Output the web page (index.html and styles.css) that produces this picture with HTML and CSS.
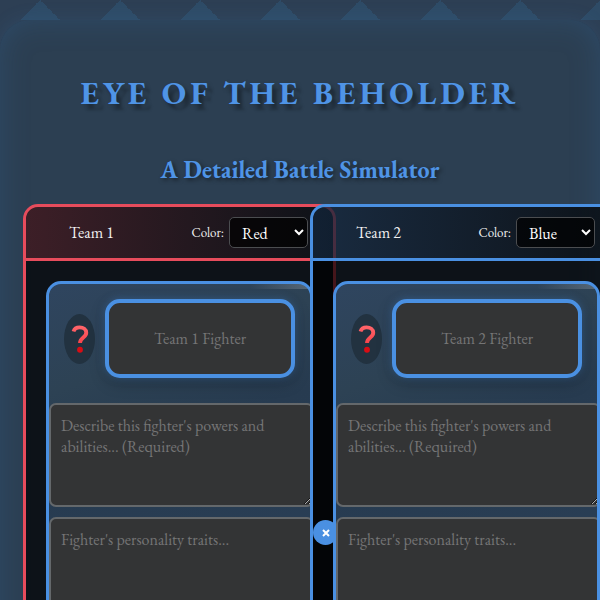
FILE: index.html
```html
<!DOCTYPE html>
<html lang="en">
<head>
<meta charset="utf-8">
<meta name="viewport" content="width=device-width, initial-scale=1">
<title>Eye of the Beholder</title>
<link rel="stylesheet" href="styles.css">
</head>
<body>
<main class="container">
  <h1 class="title">Eye of the Beholder</h1>
  <h2 class="subtitle">A Detailed Battle Simulator</h2>
  <div class="teams">
    <section class="team team-red">
      <header class="team-header">
        <h3 class="team-name">Team 1</h3>
        <div class="team-color">
          <label for="color1">Color:</label>
          <select id="color1"><option>Red</option><option>Blue</option></select>
        </div>
      </header>
      <article class="fighter">
        <div class="fighter-header">
          <span class="avatar"><svg viewBox="0 0 16 26" aria-hidden="true"><defs><linearGradient id="q1" x1="0" y1="0" x2="0" y2="1"><stop offset="0" stop-color="#ff6368"/><stop offset="1" stop-color="#f8444c"/></linearGradient></defs><path d="M2 6C2.800 3.400 4.800 2.200 7.600 2.200c3.400 0 6.200 1.600 6.200 5 0 4.600-5.800 4.400-5.800 9.600" fill="none" stroke="url(#q1)" stroke-width="3.600" stroke-linecap="butt"/><circle cx="8" cy="23" r="2.700" fill="#d80d14"/></svg></span>
          <input class="fighter-name" type="text" placeholder="Team 1 Fighter" aria-label="Team 1 Fighter">
        </div>
        <textarea placeholder="Describe this fighter's powers and abilities... (Required)" aria-label="Powers and abilities"></textarea>
        <textarea placeholder="Fighter's personality traits..." aria-label="Personality traits"></textarea>
      </article>
    </section>
    <section class="team team-blue">
      <button class="remove" type="button" aria-label="Remove"><svg viewBox="0 0 8 8" aria-hidden="true"><path d="M1 1l6 6M7 1L1 7"/></svg></button>
      <header class="team-header">
        <h3 class="team-name">Team 2</h3>
        <div class="team-color">
          <label for="color2">Color:</label>
          <select id="color2"><option>Blue</option><option>Red</option></select>
        </div>
      </header>
      <article class="fighter">
        <div class="fighter-header">
          <span class="avatar"><svg viewBox="0 0 16 26" aria-hidden="true"><path d="M2 6C2.800 3.400 4.800 2.200 7.600 2.200c3.400 0 6.200 1.600 6.200 5 0 4.600-5.800 4.400-5.800 9.600" fill="none" stroke="url(#q1)" stroke-width="3.600" stroke-linecap="butt"/><circle cx="8" cy="23" r="2.700" fill="#d80d14"/></svg></span>
          <input class="fighter-name" type="text" placeholder="Team 2 Fighter" aria-label="Team 2 Fighter">
        </div>
        <textarea placeholder="Describe this fighter's powers and abilities... (Required)" aria-label="Powers and abilities"></textarea>
        <textarea placeholder="Fighter's personality traits..." aria-label="Personality traits"></textarea>
      </article>
    </section>
  </div>
</main>
</body>
</html>
```
FILE: styles.css
```css
* {
  box-sizing: border-box;
}

html {
  overflow: hidden;
}

body {
  margin: 0;
  padding-top: 20px;
  min-height: 100vh;
  overflow: hidden;
  color: #f0f0f0;
  font-family: "EB Garamond", "Liberation Serif", serif;
  font-size: 16px;
  background:
    conic-gradient(from 135deg at 50% 0, #2e4b66 90deg, transparent 0) 0 0 / 80px 20px repeat-x,
    #2d3f54;
}

.container {
  padding: 50px 23px 40px;
  border-radius: 30px;
  background: #2c3f52;
  box-shadow: 0 0 20px rgba(74, 144, 226, 0.12), inset 0 0 30px rgba(50, 110, 170, 0.25);
}

.title {
  margin: 0;
  text-align: center;
  text-transform: uppercase;
  font-size: 32px;
  line-height: 46px;
  letter-spacing: 4px;
  color: #4f94e6;
  text-shadow: 2px 2px 4px rgba(0, 0, 0, 0.25), 5px 6px 3px rgba(0, 0, 0, 0.22);
}

.subtitle {
  margin: 37px 0 17px;
  text-align: center;
  font-size: 24px;
  line-height: 34px;
  color: #4f94e6;
  text-shadow: 2px 2px 4px rgba(0, 0, 0, 0.5);
}

.teams {
  display: grid;
  grid-template-columns: repeat(2, minmax(0, 1fr));
  gap: 20px;
}

/* Padding and border are added outside the column width, so the panels overlap. */
.team {
  position: relative;
  box-sizing: content-box;
  width: 100%;
  padding: 0 20px 20px;
  border: 3px solid;
  border-radius: 15px;
  background: rgba(0, 0, 0, 0.7);
}

.team-red {
  border-color: #e74c5c;
}

.team-blue {
  border-color: #4a90e2;
}

.team-header {
  display: flex;
  align-items: center;
  justify-content: space-between;
  margin: 0 -20px 20px;
  padding: 10px 25px 10px 43px;
  border-bottom: 3px solid;
  border-radius: 12px 12px 0 0;
}

.team-red .team-header {
  border-color: #e74c5c;
  background: linear-gradient(90deg, rgba(231, 76, 92, 0.22), transparent);
}

.team-blue .team-header {
  border-color: #4a90e2;
  background: linear-gradient(90deg, rgba(74, 144, 226, 0.2), transparent);
}

.team-name {
  margin: 0;
  font-size: 16px;
  font-weight: 400;
}

.team-color {
  display: flex;
  align-items: center;
  gap: 5px;
  font-size: 13px;
}

select {
  width: 79px;
  height: 31px;
  padding: 4px 0 4px 8px;
  border: 1px solid #4b4d50;
  border-radius: 5px;
  background: rgba(0, 0, 0, 0.7);
  color: #fff;
  font: 16px "EB Garamond", "Liberation Serif", serif;
}

.fighter {
  position: relative;
  overflow: hidden;
  border: 3px solid #4a90e2;
  border-radius: 15px;
  background: linear-gradient(160deg, #2f455f, #2d4254 25%, #273b50 45%, #2b4058);
}

/* Sheen along the top edge */
.fighter::before {
  content: "";
  position: absolute;
  top: 0;
  right: 0;
  width: 60px;
  height: 5px;
  background: linear-gradient(90deg, transparent, rgba(255, 255, 255, 0.2));
}

.fighter-header {
  display: flex;
  align-items: center;
  gap: 10px;
  padding: 15px 15px 25px;
}

.avatar {
  display: flex;
  align-items: center;
  justify-content: center;
  flex: none;
  width: 31px;
  height: 50px;
  border-radius: 50%;
  background: #223240;
}

.avatar svg {
  width: 18px;
  height: 28px;
}

.fighter-name {
  flex: 1;
  min-width: 0;
  height: 79px;
  border: 4px solid #4a90e2;
  border-radius: 15px;
  background: #333435;
  color: #fff;
  font: 16px "EB Garamond", "Liberation Serif", serif;
  text-align: center;
  box-shadow: 0 0 8px rgba(74, 144, 226, 0.35), 0 5px 15px rgba(0, 0, 0, 0.25);
}

::placeholder {
  color: #757575;
  opacity: 1;
}

textarea {
  display: block;
  width: calc(100% + 4px);
  height: 104px;
  margin: 0 0 10px;
  padding: 10px;
  border: 2px solid #64686b;
  border-radius: 7px;
  background: #333435;
  color: #fff;
  font: 16px/21px "EB Garamond", "Liberation Serif", serif;
  resize: vertical;
}

.remove {
  position: absolute;
  top: 313px;
  left: 0;
  display: flex;
  align-items: center;
  justify-content: center;
  width: 25px;
  height: 25px;
  padding: 0;
  border: 0;
  border-radius: 50%;
  background: #4a90e2;
}

.remove svg {
  width: 8px;
  height: 8px;
  fill: none;
  stroke: #fff;
  stroke-width: 2;
}
```
